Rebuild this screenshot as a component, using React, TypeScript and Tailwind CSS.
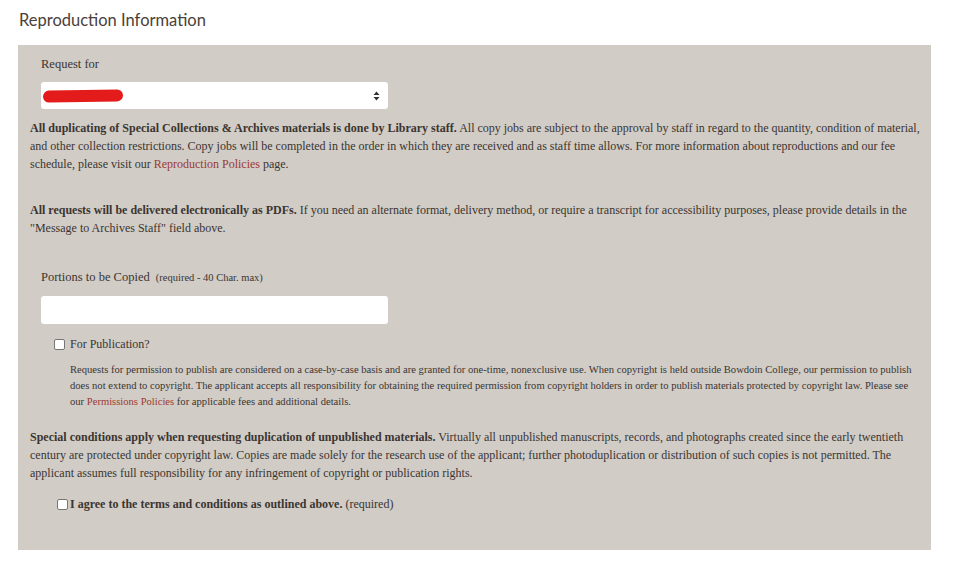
export default function App() {
  const serif = { fontFamily: '"Liberation Serif", "DejaVu Serif", serif' };
  return (
    <div className="min-h-screen bg-white text-[#3b3531]" style={serif}>
      <div className="px-[18px] pt-[8px] pb-[18px]">
        <h2
          className="ml-[1px] text-[16.5px] leading-[24px] text-[#4a413a]"
          style={{ fontFamily: 'Lato, "Open Sans", sans-serif' }}
        >
          Reproduction Information
        </h2>
        <div className="mt-[13px] h-[505px] w-[913px] bg-[#d1ccc6] pl-[12px] pr-[8px] pt-[11px] pb-[38px]">
          <div className="pl-[11px]">
            <label className="block text-[12.5px] leading-[16px]">Request for</label>
            <div className="mt-[10px] flex h-[27px] w-[347px] items-center justify-between rounded-[3px] bg-white pl-[2px] pr-[8px]">
              <span className="block h-[12px] w-[80px] -rotate-1 rounded-full bg-[#e31b1b]" />
              <svg width="7" height="10" viewBox="0 0 7 10" className="text-[#333]">
                <path d="M3.5 0.5 L6.5 4 H0.5 Z M3.5 9.5 L0.5 6 H6.5 Z" fill="currentColor" />
              </svg>
            </div>
          </div>

          <p className="mt-[10px] text-[12px] leading-[18px]">
            <b>All duplicating of Special Collections &amp; Archives materials is done by Library staff.</b>{' '}
            All copy jobs are subject to the approval by staff in regard to the quantity, condition of material,
            and other collection restrictions. Copy jobs will be completed in the order in which they are received
            and as staff time allows. For more information about reproductions and our fee schedule, please visit our{' '}
            <a className="text-[#9c3a31]">Reproduction Policies</a> page.
          </p>

          <p className="mt-[28px] text-[12px] leading-[18px]">
            <b>All requests will be delivered electronically as PDFs.</b> If you need an alternate format, delivery
            method, or require a transcript for accessibility purposes, please provide details in the "Message to
            Archives Staff" field above.
          </p>

          <div className="mt-[32px] pl-[11px]">
            <label className="block text-[12.5px] leading-[16px]">
              Portions to be Copied <span className="ml-[3px] text-[10.5px]">(required - 40 Char. max)</span>
            </label>
            <div className="mt-[10px] h-[28px] w-[347px] rounded-[3px] bg-white" />
            <div className="mt-[12px] flex items-center pl-[13px]">
              <span className="block h-[11px] w-[11px] rounded-[2px] border border-[#767676] bg-white" />
              <span className="ml-[5px] text-[12px] leading-[16px]">For Publication?</span>
            </div>
            <p className="mt-[10px] pl-[29px] pr-[4px] text-[10.6px] leading-[16px]">
              Requests for permission to publish are considered on a case-by-case basis and are granted for one-time,
              nonexclusive use. When copyright is held outside Bowdoin College, our permission to publish does not
              extend to copyright. The applicant accepts all responsibility for obtaining the required permission from
              copyright holders in order to publish materials protected by copyright law. Please see our{' '}
              <a className="text-[#9c3a31]">Permissions Policies</a> for applicable fees and additional details.
            </p>
          </div>

          <p className="mt-[18px] text-[12px] leading-[18px]">
            <b>Special conditions apply when requesting duplication of unpublished materials.</b> Virtually all
            unpublished manuscripts, records, and photographs created since the early twentieth century are protected
            under copyright law. Copies are made solely for the research use of the applicant; further
            photoduplication or distribution of such copies is not permitted. The applicant assumes full
            responsibility for any infringement of copyright or publication rights.
          </p>

          <div className="mt-[14px] flex items-center pl-[27px]">
            <span className="block h-[11px] w-[11px] rounded-[2px] border border-[#767676] bg-white" />
            <span className="ml-[2px] text-[12px] leading-[16px]">
              <b>I agree to the terms and conditions as outlined above.</b> (required)
            </span>
          </div>
        </div>
      </div>
    </div>
  );
}
